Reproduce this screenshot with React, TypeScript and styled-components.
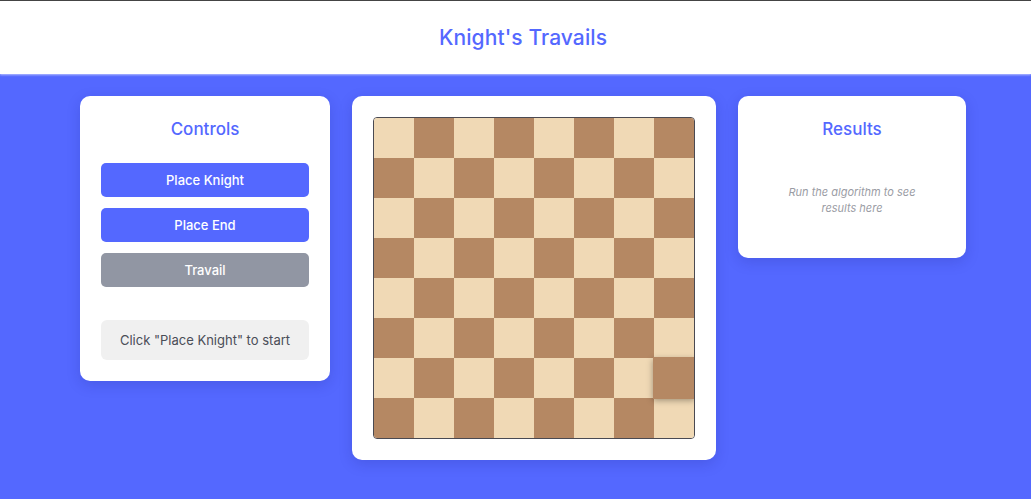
import React from 'react'
import styled, { createGlobalStyle } from 'styled-components'

const GlobalStyle = createGlobalStyle`
  html, body {
    margin: 0;
    padding: 0;
    overflow: hidden;
  }
  body {
    font-family: Inter, "Noto Sans", sans-serif;
    background: #5468ff;
  }
`

const Page = styled.div`
  min-height: 100vh;
  background: #5468ff;
  padding-left: 15px;
`
const Header = styled.header`
  height: 73px;
  background: #fff;
  border-top: 1px solid #444;
  margin-left: -15px;
  padding-left: 15px;
  display: flex;
  align-items: center;
  justify-content: center;
  box-shadow: 0 1px 2px rgba(255, 255, 255, 0.6);
`
const Title = styled.h1`
  margin: 0;
  font-size: 21px;
  font-weight: 500;
  color: #5468ff;
  letter-spacing: 0.1px;
`
const Main = styled.main`
  display: flex;
  justify-content: center;
  align-items: flex-start;
  gap: 22px;
  padding-top: 22px;
`
const Card = styled.section<{ $width: number }>`
  width: ${p => p.$width}px;
  box-sizing: border-box;
  background: #fff;
  border-radius: 10px;
  box-shadow: 0 4px 14px rgba(20, 30, 120, 0.18);
  padding: 21px;
  display: flex;
  flex-direction: column;
`
const CardTitle = styled.h2`
  margin: 0 0 22px;
  font-size: 17px;
  line-height: 24px;
  font-weight: 500;
  color: #5468ff;
  text-align: center;
`
const Button = styled.button<{ $disabled?: boolean }>`
  height: 34px;
  border: none;
  border-radius: 5px;
  background: ${p => (p.$disabled ? '#9196a3' : '#5468ff')};
  color: #fff;
  font-family: inherit;
  font-size: 13px;
  font-weight: 500;
  margin-bottom: 11px;
  cursor: ${p => (p.$disabled ? 'default' : 'pointer')};
`
const Status = styled.div`
  margin-top: 22px;
  height: 40px;
  border-radius: 6px;
  background: #f0f0f0;
  color: #4a4d57;
  font-size: 13px;
  display: flex;
  align-items: center;
  justify-content: center;
`
const Board = styled.div`
  display: grid;
  grid-template-columns: repeat(8, 40px);
  grid-template-rows: repeat(8, 40px);
  border: 1px solid #4a4a52;
  border-radius: 4px;
  overflow: hidden;
  width: 320px;
`
const Square = styled.div<{ $dark: boolean; $hover?: boolean }>`
  background: ${p => (p.$dark ? '#b58863' : '#f0d9b5')};
  position: relative;
  ${p =>
    p.$hover &&
    `
    z-index: 1;
    transform: scale(1.05);
    box-shadow: 0 2px 6px rgba(0, 0, 0, 0.35);
  `}
`
const Placeholder = styled.p`
  margin: 21px auto 21px;
  max-width: 150px;
  font-size: 11px;
  line-height: 16px;
  font-style: italic;
  color: #9a9ca4;
  text-align: center;
`

function App() {
  const squares = []
  for (let r = 0; r < 8; r++) {
    for (let c = 0; c < 8; c++) {
      squares.push(<Square key={`${r}-${c}`} $dark={(r + c) % 2 === 1} $hover={r === 6 && c === 7} />)
    }
  }

  return (
    <>
      <GlobalStyle />
      <Page>
        <Header>
          <Title>Knight's Travails</Title>
        </Header>
        <Main>
          <Card $width={250}>
            <CardTitle>Controls</CardTitle>
            <Button>Place Knight</Button>
            <Button>Place End</Button>
            <Button $disabled>Travail</Button>
            <Status>Click "Place Knight" to start</Status>
          </Card>
          <Card $width={364}>
            <Board>{squares}</Board>
          </Card>
          <Card $width={228}>
            <CardTitle>Results</CardTitle>
            <Placeholder>Run the algorithm to see results here</Placeholder>
          </Card>
        </Main>
      </Page>
    </>
  )
}

export default App
